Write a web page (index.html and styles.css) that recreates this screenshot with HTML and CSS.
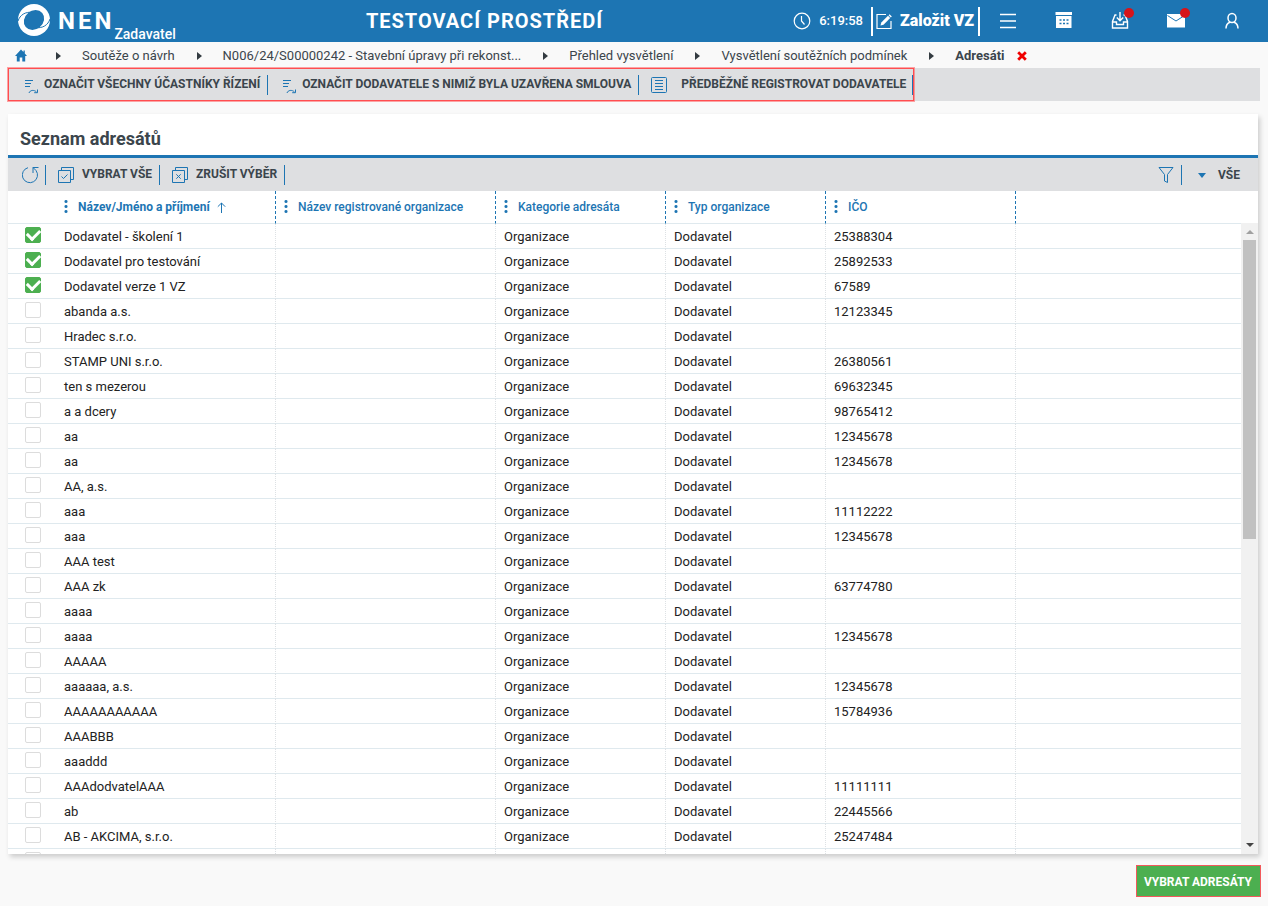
FILE: index.html
```html
<!DOCTYPE html>
<html lang="cs">
<head>
<meta charset="utf-8">
<meta name="viewport" content="width=device-width, initial-scale=1">
<title>NEN – Adresáti</title>
<link rel="stylesheet" href="styles.css">
</head>
<body>
<header class="topbar">
  <a class="brand" href="#">
    <svg class="brand-mark" width="32" height="32" viewBox="0 0 32 32" aria-hidden="true">
      <circle cx="16" cy="16" r="16" fill="#fff"/>
      <ellipse cx="16" cy="16" rx="10.800" ry="9.200" transform="rotate(-40 16 16)" fill="#1d75b3"/>
      <path d="M0 17C2 11 7 7.500 15 8.300M32 15C30 21 25 24.500 17 23.700" fill="none" stroke="#1d75b3" stroke-width="1"/>
    </svg>
    <span class="brand-name">NEN</span>
    <span class="brand-role">Zadavatel</span>
  </a>
  <div class="environment">TESTOVACÍ PROSTŘEDÍ</div>
  <div class="clock">
    <svg width="18" height="18" viewBox="0 0 18 18" fill="none" stroke="#fff" stroke-width="1.200" aria-hidden="true"><circle cx="9" cy="9" r="7.800"/><path d="M8.500 4v5l3 3.500"/></svg>
    <time>6:19:58</time>
  </div>
  <button class="create" type="button">
    <svg width="17" height="17" viewBox="0 0 17 17" fill="none" stroke="#fff" aria-hidden="true"><path d="M10 1.500H1v14h14V8" stroke-width="1.200"/><path d="M4.500 12.500l.8-3L12 2.800l2.200 2.200-6.700 6.700z" fill="#fff" stroke="none"/><path d="M12.600 2.200l1-1 2.200 2.200-1 1z" fill="#fff" stroke="none"/></svg>
    Založit VZ
  </button>
  <nav class="shortcuts" aria-label="Zkratky">
    <button type="button" aria-label="Menu"><svg width="18" height="18" viewBox="0 0 18 18" stroke="#fff" stroke-width="1.600" aria-hidden="true"><path d="M1 2.500h16M1 9h16M1 15.500h16"/></svg></button>
    <button type="button" aria-label="Kalendář"><svg width="18" height="18" viewBox="0 0 18 18" aria-hidden="true"><path d="M.5 0h16.500v3H.5zM1 4h15.500v12H1z" fill="#fff"/><path d="M4.500 8h2M8 8h2M11.500 8h2M4.500 11.500h2M8 11.500h2M11.500 11.500h2" stroke="#1d75b3" stroke-width="1.500"/></svg></button>
    <button type="button" aria-label="Doručené"><svg width="18" height="18" viewBox="0 0 18 18" fill="none" stroke="#fff" stroke-width="1.400" aria-hidden="true"><path d="M5.500 3H4L1.500 9.500V16h15V9.500L14 3h-1.500M1.500 10h4v2.500h7V10h4M9 0v8.500M5.800 5.500L9 8.700l3.200-3.200"/></svg><span class="badge"></span></button>
    <button type="button" aria-label="Zprávy"><svg width="18" height="18" viewBox="0 0 18 18" aria-hidden="true"><path d="M0 2h18v13.500H0z" fill="#fff"/><path d="M.5 3.500L9 9l8.500-5.500" fill="none" stroke="#1d75b3"/></svg><span class="badge"></span></button>
    <button type="button" aria-label="Uživatel"><svg width="18" height="18" viewBox="0 0 18 18" fill="none" stroke="#fff" stroke-width="1.500" aria-hidden="true"><ellipse cx="9" cy="6" rx="4" ry="4.500"/><path d="M3 16.500c0-4 1.800-5.500 4-6.300M15 16.500c0-4-1.800-5.500-4-6.300"/></svg></button>
  </nav>
</header>

<nav class="crumbs" aria-label="Drobečková navigace">
  <a class="home" href="#" aria-label="Domů"><svg width="14" height="14" viewBox="0 0 14 14" fill="#1d75b3" aria-hidden="true"><path d="M7 .5L1 7h1.800v5.500h2.900v-4h2.600v4h2.900V7H13l-2.200-2.500v-3H9.500v1.600z"/></svg></a>
  <i class="chev"></i><a href="#">Soutěže o návrh</a>
  <i class="chev"></i><a href="#">N006/24/S00000242 - Stavební úpravy při rekonst...</a>
  <i class="chev"></i><a href="#">Přehled vysvětlení</a>
  <i class="chev"></i><a href="#">Vysvětlení soutěžních podmínek</a>
  <i class="chev"></i><span class="current" aria-current="page">Adresáti</span>
  <button class="close" type="button" aria-label="Zavřít"><svg width="10" height="10" viewBox="0 0 10 10" stroke="#f00000" stroke-width="2.800" aria-hidden="true"><path d="M1.200 1.200l7.600 7.600M8.800 1.200L1.200 8.800"/></svg></button>
</nav>

<div class="actions">
  <div class="actions-marked">
    <button class="tool mark" type="button"><svg width="14" height="14" viewBox="0 0 14 14" fill="none" stroke="#1d75b3" aria-hidden="true"><path d="M0 .5h8M0 3.500h6M0 6.500h5M4 13c1-3 5-3.500 7.500-1M12.500 9.500v3.200h-3.300"/></svg><span>OZNAČIT VŠECHNY ÚČASTNÍKY ŘÍZENÍ</span></button>
    <button class="tool mark" type="button"><svg width="14" height="14" viewBox="0 0 14 14" fill="none" stroke="#1d75b3" aria-hidden="true"><path d="M0 .5h8M0 3.500h6M0 6.500h5M4 13c1-3 5-3.500 7.500-1M12.500 9.500v3.200h-3.300"/></svg><span>OZNAČIT DODAVATELE S NIMIŽ BYLA UZAVŘENA SMLOUVA</span></button>
    <button class="tool register" type="button"><svg width="16" height="16" viewBox="0 0 16 16" fill="none" stroke="#1d75b3" aria-hidden="true"><rect x=".5" y=".5" width="15" height="15" rx="1"/><path d="M4 3.500h8M4 6.500h8M4 9.500h8M4 12.500h8"/></svg><span>PŘEDBĚŽNĚ REGISTROVAT DODAVATELE</span></button>
  </div>
</div>

<main class="panel">
  <h1>Seznam adresátů</h1>
  <div class="toolbar">
    <button class="tool refresh" type="button" aria-label="Obnovit"><svg width="17" height="18" viewBox="0 0 17 18" fill="none" stroke="#1d75b3" aria-hidden="true"><path d="M6 1.700A7.600 7.600 0 1 0 14 4.500L11 1.500M11 7V1.500h5.500"/></svg></button>
    <button class="tool" type="button"><svg width="16" height="16" viewBox="0 0 16 16" fill="none" stroke="#1d75b3" aria-hidden="true"><path d="M.5 3.500h12v12H.5zM3.500 3V.5h12v12H13M3.500 9.500l2 2 4-4"/></svg><span>VYBRAT VŠE</span></button>
    <button class="tool" type="button"><svg width="16" height="16" viewBox="0 0 16 16" fill="none" stroke="#1d75b3" aria-hidden="true"><path d="M.5 3.500h12v12H.5zM3.500 3V.5h12v12H13M4.300 7.300l4.400 4.400M8.700 7.300l-4.400 4.400"/></svg><span>ZRUŠIT VÝBĚR</span></button>
    <div class="filters">
      <button class="tool filter" type="button" aria-label="Filtr"><svg width="16" height="16" viewBox="0 0 16 16" fill="none" stroke="#1d75b3" aria-hidden="true"><path d="M1 .5h14L9.500 7.500v8l-3-1.500V7.500z"/></svg></button>
      <button class="view" type="button"><i class="caret"></i>VŠE</button>
    </div>
  </div>
  <div class="grid">
    <table>
      <colgroup><col class="c-check"><col class="c-name"><col class="c-reg"><col class="c-cat"><col class="c-type"><col class="c-ico"><col></colgroup>
      <thead>
        <tr>
          <th class="check"></th>
          <th class="sorted" aria-sort="ascending"><i class="dots"></i>Název/Jméno a příjmení<svg width="9" height="12" viewBox="0 0 9 12" fill="none" stroke="#1d75b3" aria-hidden="true"><path d="M4.500 11V1M.8 4.700L4.500 1l3.700 3.700"/></svg></th>
          <th><i class="dots"></i>Název registrované organizace</th>
          <th><i class="dots"></i>Kategorie adresáta</th>
          <th><i class="dots"></i>Typ organizace</th>
          <th><i class="dots"></i>IČO</th>
          <th class="rest"></th>
        </tr>
      </thead>
      <tbody>
        <tr><td class="check"><input type="checkbox" aria-labelledby="r1" checked></td><td id="r1">Dodavatel - školení 1</td><td></td><td>Organizace</td><td>Dodavatel</td><td>25388304</td><td class="rest"></td></tr>
        <tr><td class="check"><input type="checkbox" aria-labelledby="r2" checked></td><td id="r2">Dodavatel pro testování</td><td></td><td>Organizace</td><td>Dodavatel</td><td>25892533</td><td class="rest"></td></tr>
        <tr><td class="check"><input type="checkbox" aria-labelledby="r3" checked></td><td id="r3">Dodavatel verze 1 VZ</td><td></td><td>Organizace</td><td>Dodavatel</td><td>67589</td><td class="rest"></td></tr>
        <tr><td class="check"><input type="checkbox" aria-labelledby="r4"></td><td id="r4">abanda a.s.</td><td></td><td>Organizace</td><td>Dodavatel</td><td>12123345</td><td class="rest"></td></tr>
        <tr><td class="check"><input type="checkbox" aria-labelledby="r5"></td><td id="r5">Hradec s.r.o.</td><td></td><td>Organizace</td><td>Dodavatel</td><td></td><td class="rest"></td></tr>
        <tr><td class="check"><input type="checkbox" aria-labelledby="r6"></td><td id="r6">STAMP UNI s.r.o.</td><td></td><td>Organizace</td><td>Dodavatel</td><td>26380561</td><td class="rest"></td></tr>
        <tr><td class="check"><input type="checkbox" aria-labelledby="r7"></td><td id="r7">ten s mezerou</td><td></td><td>Organizace</td><td>Dodavatel</td><td>69632345</td><td class="rest"></td></tr>
        <tr><td class="check"><input type="checkbox" aria-labelledby="r8"></td><td id="r8">a a dcery</td><td></td><td>Organizace</td><td>Dodavatel</td><td>98765412</td><td class="rest"></td></tr>
        <tr><td class="check"><input type="checkbox" aria-labelledby="r9"></td><td id="r9">aa</td><td></td><td>Organizace</td><td>Dodavatel</td><td>12345678</td><td class="rest"></td></tr>
        <tr><td class="check"><input type="checkbox" aria-labelledby="r10"></td><td id="r10">aa</td><td></td><td>Organizace</td><td>Dodavatel</td><td>12345678</td><td class="rest"></td></tr>
        <tr><td class="check"><input type="checkbox" aria-labelledby="r11"></td><td id="r11">AA, a.s.</td><td></td><td>Organizace</td><td>Dodavatel</td><td></td><td class="rest"></td></tr>
        <tr><td class="check"><input type="checkbox" aria-labelledby="r12"></td><td id="r12">aaa</td><td></td><td>Organizace</td><td>Dodavatel</td><td>11112222</td><td class="rest"></td></tr>
        <tr><td class="check"><input type="checkbox" aria-labelledby="r13"></td><td id="r13">aaa</td><td></td><td>Organizace</td><td>Dodavatel</td><td>12345678</td><td class="rest"></td></tr>
        <tr><td class="check"><input type="checkbox" aria-labelledby="r14"></td><td id="r14">AAA test</td><td></td><td>Organizace</td><td>Dodavatel</td><td></td><td class="rest"></td></tr>
        <tr><td class="check"><input type="checkbox" aria-labelledby="r15"></td><td id="r15">AAA zk</td><td></td><td>Organizace</td><td>Dodavatel</td><td>63774780</td><td class="rest"></td></tr>
        <tr><td class="check"><input type="checkbox" aria-labelledby="r16"></td><td id="r16">aaaa</td><td></td><td>Organizace</td><td>Dodavatel</td><td></td><td class="rest"></td></tr>
        <tr><td class="check"><input type="checkbox" aria-labelledby="r17"></td><td id="r17">aaaa</td><td></td><td>Organizace</td><td>Dodavatel</td><td>12345678</td><td class="rest"></td></tr>
        <tr><td class="check"><input type="checkbox" aria-labelledby="r18"></td><td id="r18">AAAAA</td><td></td><td>Organizace</td><td>Dodavatel</td><td></td><td class="rest"></td></tr>
        <tr><td class="check"><input type="checkbox" aria-labelledby="r19"></td><td id="r19">aaaaaa, a.s.</td><td></td><td>Organizace</td><td>Dodavatel</td><td>12345678</td><td class="rest"></td></tr>
        <tr><td class="check"><input type="checkbox" aria-labelledby="r20"></td><td id="r20">AAAAAAAAAAA</td><td></td><td>Organizace</td><td>Dodavatel</td><td>15784936</td><td class="rest"></td></tr>
        <tr><td class="check"><input type="checkbox" aria-labelledby="r21"></td><td id="r21">AAABBB</td><td></td><td>Organizace</td><td>Dodavatel</td><td></td><td class="rest"></td></tr>
        <tr><td class="check"><input type="checkbox" aria-labelledby="r22"></td><td id="r22">aaaddd</td><td></td><td>Organizace</td><td>Dodavatel</td><td></td><td class="rest"></td></tr>
        <tr><td class="check"><input type="checkbox" aria-labelledby="r23"></td><td id="r23">AAAdodvatelAAA</td><td></td><td>Organizace</td><td>Dodavatel</td><td>11111111</td><td class="rest"></td></tr>
        <tr><td class="check"><input type="checkbox" aria-labelledby="r24"></td><td id="r24">ab</td><td></td><td>Organizace</td><td>Dodavatel</td><td>22445566</td><td class="rest"></td></tr>
        <tr><td class="check"><input type="checkbox" aria-labelledby="r25"></td><td id="r25">AB - AKCIMA, s.r.o.</td><td></td><td>Organizace</td><td>Dodavatel</td><td>25247484</td><td class="rest"></td></tr>
        <tr><td class="check"><input type="checkbox" aria-label="Vybrat řádek"></td><td></td><td></td><td></td><td></td><td></td><td class="rest"></td></tr>
      </tbody>
    </table>
    <div class="scrollbar" aria-hidden="true"><i class="up"></i><div class="track"><div class="thumb"></div></div><i class="down"></i></div>
  </div>
</main>

<footer class="footer"><button class="primary" type="button">VYBRAT ADRESÁTY</button></footer>
</body>
</html>
```

FILE: styles.css
```css
:root {
  --blue: #1d75b3;
  --bar: #dedfe1;
  --ink: #3b454c;
  --line: #dfe9ee;
}

* { box-sizing: border-box; }

body {
  display: flex;
  flex-direction: column;
  height: 100vh;
  margin: 0;
  overflow: hidden;
  background: #f9f9f9;
  color: var(--ink);
  font: 13px/16px Roboto, "Liberation Sans", sans-serif;
}

button {
  margin: 0;
  padding: 0;
  border: 0;
  background: none;
  color: inherit;
  font: inherit;
  cursor: pointer;
}

a { color: inherit; text-decoration: none; }
svg { display: block; flex: none; }

.topbar {
  display: flex;
  flex: none;
  align-items: center;
  height: 42px;
  padding: 0 8px 0 18px;
  background: var(--blue);
  color: #fff;
}

.brand { display: flex; align-items: center; height: 42px; }
.brand-mark { margin-bottom: 2px; }
.brand-name { margin-left: 8px; font-size: 24px; font-weight: 700; line-height: 40px; letter-spacing: 3px; }
.brand-role { align-self: flex-end; font-size: 14px; font-weight: 500; }

.environment {
  flex: 1;
  padding-bottom: 1px;
  font-size: 20px;
  font-weight: 700;
  line-height: 40px;
  letter-spacing: 1px;
  text-align: center;
  white-space: nowrap;
}

.clock { display: flex; align-items: center; gap: 8px; padding-right: 8px; font-weight: 500; }

.create {
  display: flex;
  align-items: center;
  gap: 7px;
  height: 29px;
  padding: 0 4px 0 3px;
  border: solid #fff;
  border-width: 0 2px;
  font-size: 16px;
  font-weight: 900;
  white-space: nowrap;
}

.shortcuts { display: flex; }
.shortcuts button { display: grid; position: relative; place-items: center; width: 56px; height: 42px; }
.badge { position: absolute; top: 8px; right: 14px; width: 10px; height: 10px; border-radius: 50%; background: #d7141a; }

.crumbs {
  display: flex;
  flex: none;
  align-items: center;
  height: 26px;
  padding: 1px 0 0 14px;
  white-space: nowrap;
}
.home { margin-right: 6px; }
.chev {
  margin: 0 21px 0 22px;
  border: solid transparent;
  border-width: 4px 0 4px 5px;
  border-left-color: #333b41;
}
.current { font-weight: 700; }
.close { margin-left: 12px; }

.actions { display: flex; flex: none; height: 33px; margin: 0 8px; background: var(--bar); }
.actions-marked { display: flex; align-items: center; border: 1px solid #ff4d50; box-shadow: 0 0 0 1px rgba(255, 77, 80, .5); }

.tool {
  display: flex;
  align-items: center;
  gap: 8px;
  height: 20px;
  padding: 0 7px 0 12px;
  border-right: 1px solid var(--blue);
  font-size: 12px;
  font-weight: 700;
  line-height: 16px;
  white-space: nowrap;
}
.tool span { padding-bottom: 2px; }
.mark { gap: 5px; padding-left: 15px; }
.mark:first-child { padding-left: 16px; }
.register { gap: 14px; }
.register:last-child { padding-right: 6px; }
.mark svg { margin-top: 4px; }

.panel {
  display: flex;
  flex: 1;
  flex-direction: column;
  min-height: 0;
  margin: 13px 10px 0 8px;
  background: #fff;
  box-shadow: 2px 3px 5px rgba(0, 0, 0, .18);
}
.panel h1 {
  flex: none;
  margin: 0;
  padding: 13px 12px 4px;
  border-bottom: 3px solid var(--blue);
  font-size: 18px;
  font-weight: 700;
  line-height: 24px;
}

.toolbar { display: flex; flex: none; align-items: center; height: 33px; background: var(--bar); }
.refresh { padding-left: 14px; padding-right: 6px; }
.filters { display: flex; align-items: center; margin-left: auto; }
.view { display: flex; align-items: center; gap: 12px; padding: 1px 18px 0 16px; font-size: 12px; font-weight: 700; }
.caret { border: solid transparent; border-width: 5px 4px 0; border-top-color: var(--blue); }

.grid { display: flex; flex: 1; min-height: 0; overflow: hidden; }
table { flex: 1; align-self: flex-start; width: 0; border-collapse: separate; border-spacing: 0; table-layout: fixed; }
.c-check { width: 48px; }
.c-name, .c-reg { width: 220px; }
.c-cat { width: 170px; }
.c-type { width: 160px; }
.c-ico { width: 190px; }

th, td {
  padding: 0 8px;
  border-bottom: 1px solid var(--line);
  text-align: left;
  white-space: nowrap;
}
th {
  height: 33px;
  border-right: 1px dashed var(--blue);
  color: var(--blue);
  font-size: 12px;
  font-weight: 500;
}
td { height: 25px; padding-top: 2px; border-right: 1px dotted #dde1e4; color: #222; }
th.check, td.check, th.rest, td.rest { border-right: 0; }
th.check, td.check { padding: 0 0 0 17px; }
.sorted { font-weight: 700; }
.sorted svg { display: inline-block; margin-left: 7px; vertical-align: -3px; }

.dots {
  display: inline-block;
  width: 4px;
  height: 15px;
  margin-right: 10px;
  background: radial-gradient(circle, var(--blue) 1px, transparent 2px) 0 0 / 4px 5px;
  vertical-align: -3px;
}

input[type="checkbox"] {
  display: block;
  width: 16px;
  height: 16px;
  margin: 0 0 2px;
  border: 1px solid #dcdcdc;
  border-radius: 2px;
  background: #fff;
  appearance: none;
}
input[type="checkbox"]:checked { display: grid; place-items: center; border-color: #4caf50; background: #4caf50; }
input[type="checkbox"]:checked::before {
  content: "";
  width: 10px;
  height: 6px;
  margin-bottom: 3px;
  border: solid #fff;
  border-width: 0 0 3px 3px;
  transform: rotate(-45deg);
}

.scrollbar {
  display: flex;
  flex: none;
  flex-direction: column;
  align-items: center;
  width: 17px;
  margin-top: 32px;
  padding: 7px 0;
  background: #f1f1f1;
}
.up { border: solid transparent; border-width: 0 4px 4px; border-bottom-color: #a0a0a0; }
.down { border: solid transparent; border-width: 4px 4px 0; border-top-color: #444; }
.track { flex: 1; width: 13px; margin: 6px 0 5px; }
.thumb { height: 50%; background: #c1c1c1; }

.footer { display: flex; flex: none; justify-content: flex-end; padding: 12px 8px 10px; }
.primary {
  height: 30px;
  padding: 2px 8px 0 7px;
  background: #4caf50;
  box-shadow: 0 0 0 1px #f2595b;
  color: #fff;
  font-size: 12px;
  font-weight: 700;
}
```
